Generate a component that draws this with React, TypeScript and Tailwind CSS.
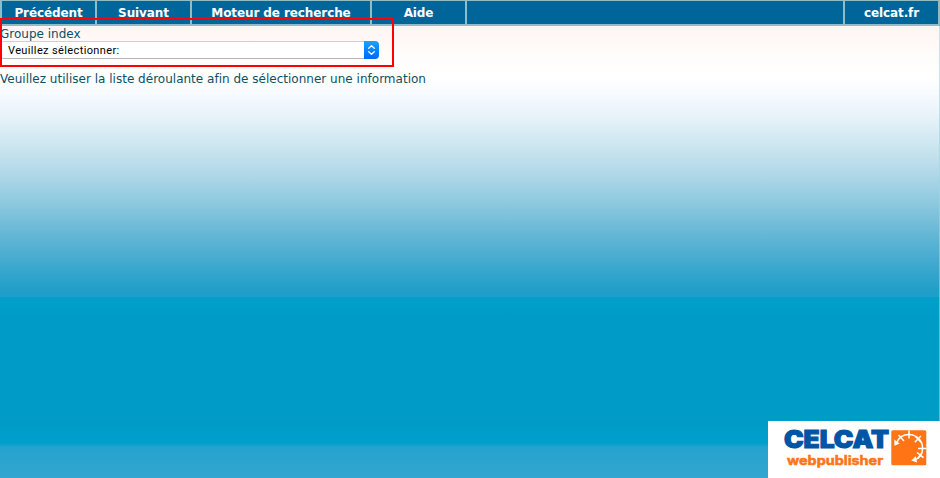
const menu = [
  { label: 'Précédent', cell: 'w-[95px]' },
  { label: 'Suivant', cell: 'w-[95px]' },
  { label: 'Moteur de recherche', cell: 'w-[180px]' },
  { label: 'Aide', cell: 'w-[95px]' },
];

function NavBar() {
  return (
    <nav className="flex h-[26px] border-t border-b-2 border-l-2 border-[#8fbcc5] bg-[#006699] text-[12px] leading-[24px] font-bold tracking-[-0.1px] text-white">
      {menu.map((m) => (
        <a key={m.label} className={`${m.cell} h-[23px] shrink-0 border-r-2 border-[#8fbcc5] text-center whitespace-nowrap`}>
          {m.label}
        </a>
      ))}
      <div className="flex-1 border-r-2 border-[#8fbcc5]" />
      <a className="h-[23px] w-[95px] shrink-0 border-r-2 border-[#8fbcc5] text-center">celcat.fr</a>
    </nav>
  );
}

function GroupSelect() {
  return (
    <div className="flex h-[18px] w-[379px] overflow-hidden rounded-[4px] bg-white">
      <div className="flex-1 rounded-l-[4px] border-y border-l border-t-[#d0d0d0] border-b-[#b4b4b4] border-l-[#c8c8c8] pl-[7px] font-[Roboto,sans-serif] text-[11px] leading-[17px] tracking-[0.37px] text-black">
        Veuillez sélectionner:
      </div>
      <div className="w-[15px] bg-linear-to-b from-[#20a0ff] to-[#0068fb]">
        <svg width="15" height="18" viewBox="0 0 15 18" fill="none" stroke="white" strokeWidth="1.3" strokeLinecap="round" strokeLinejoin="round">
          <path d="M4.7 7.3 7.5 4.7l2.8 2.6M4.7 10.7l2.8 2.6 2.8-2.6" />
        </svg>
      </div>
    </div>
  );
}

function Logo() {
  return (
    <svg width="172" height="57" viewBox="0 0 172 57" className="block bg-white">
      <text x="16" y="26.8" textLength="105" lengthAdjust="spacingAndGlyphs" fontFamily="Inter, sans-serif" fontWeight="900" fontSize="24" fill="#0055a5" stroke="#0055a5" strokeWidth="1.1">
        CELCAT
      </text>
      <text x="19" y="44" textLength="96" lengthAdjust="spacingAndGlyphs" fontFamily="Inter, sans-serif" fontWeight="700" fontSize="12.5" fill="#ff7414" stroke="#ff7414" strokeWidth="0.5">
        webpublisher
      </text>
      <rect x="123.3" y="9.3" width="35" height="35" rx="1.5" fill="#ff7414" />
      <g fill="none" stroke="white" strokeWidth="1.5">
        <path d="M128.7 22C130.5 16.8 135 13.4 141 13.4A13.8 13.8 0 0 1 154.6 27.5C154.6 33 151.5 37 146 39" />
        <path d="M141 9.3v8.2M150 27.5h8.5M130.5 14l5.5 6M152.8 15l-6 6.3M147.2 15.3l5.6 5.7M149 31.5l6.5 5.2M150 37.5l4-6" />
      </g>
      <path d="m126.4 24.8-.1-6.4 5.4 4zM143.2 39.6l4.6-4.4 1.3 6.2z" fill="white" />
    </svg>
  );
}

export default function App() {
  return (
    <div className="relative flex h-[478px] w-[940px] flex-col overflow-hidden bg-[linear-gradient(to_bottom,#fff5f2_26px,#fffdfb_58px,#ffffff_78px,#f5f9fe_97px,#e6f2f9_118px,#c6e3ee_152px,#b7dbea_168px,#91cbe0_200px,#68b8d6_232px,#40a9cf_264px,#209fc9_290px,#1d9fca_297px,#009fca_297px,#009bc7_325px,#009bc7_410px,#009fcb_443px,#24a3ce_447px,#31a6d0_478px)] font-['DejaVu_Sans',Verdana,sans-serif] text-[12px] text-[#0b5063]">
      <NavBar />
      <main className="flex-1 border-r border-[#a0d3e2]/60">
        <div className="h-[15px] leading-[16px]">Groupe index</div>
        <GroupSelect />
        <p className="mt-[12px] leading-[16px] tracking-[0.012px]">Veuillez utiliser la liste déroulante afin de sélectionner une information</p>
      </main>
      <footer className="flex justify-end">
        <Logo />
      </footer>
      <div className="pointer-events-none absolute top-[18px] left-0 h-[49px] w-[394px] border-2 border-[#ff0000]" />
    </div>
  );
}
